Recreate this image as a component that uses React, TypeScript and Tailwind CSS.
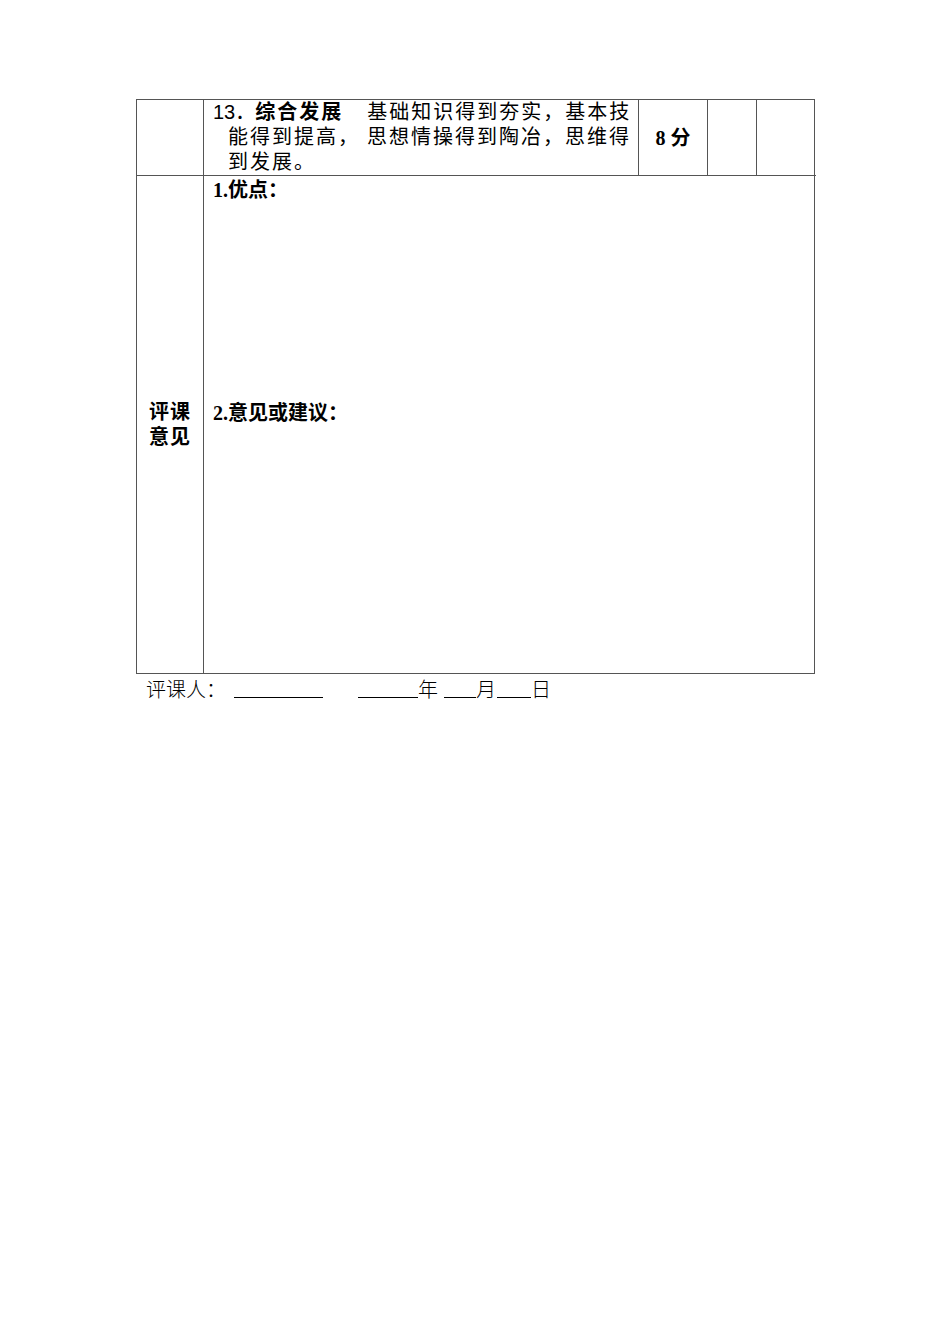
const cjk = { fontFamily: '"Liberation Serif", "Noto Sans CJK SC", serif' };

export default function App() {
  return (
    <div className="min-h-[1344px] w-[950px] bg-white text-black" style={cjk}>
      <div className="pt-[99px] pl-[136px]">
        <div className="grid w-[679px] grid-cols-[67px_435px_69px_49px_59px] border border-[#555]">
          {/* row 1 */}
          <div className="h-[76px] border-r border-b border-[#555]" />
          <div className="border-r border-b border-[#555] pl-[9px] text-[20px] leading-[25px] tracking-[2px]">
            <div>
              <span style={{ fontFamily: '"Liberation Sans", "Noto Sans CJK SC", sans-serif' }} className="tracking-normal">13．</span>
              <span className="font-bold">综合发展</span>
              <span className="inline-block w-[24px]" />
              基础知识得到夯实，基本技
            </div>
            <div className="pl-[15px]">能得到提高，&nbsp;思想情操得到陶冶，思维得</div>
            <div className="pl-[15px]">到发展。</div>
          </div>
          <div className="flex items-center justify-center border-r border-b border-[#555] text-[20px] font-bold">
            8<span className="ml-[5px]">分</span>
          </div>
          <div className="border-r border-b border-[#555]" />
          <div className="border-b border-[#555]" />

          {/* row 2 */}
          <div className="flex h-[497px] flex-col items-center justify-center border-r border-[#555] text-[20px] font-bold leading-[25px] tracking-[1px]">
            <div>评课</div>
            <div>意见</div>
          </div>
          <div className="col-span-4 pl-[9px] pt-[2px] text-[20px] font-bold leading-[25px]">
            <div>1.优点：</div>
            <div className="mt-[198px]">2.意见或建议：</div>
          </div>
        </div>
        <div className="flex items-end pl-[10px] pt-[2px] text-[20px] leading-[25px]" style={{ fontFamily: '"Noto Sans CJK SC", sans-serif', fontWeight: 300 }}>
          <span>评课人：</span>
          <span className="ml-[8px] mb-[3px] inline-block w-[89px] border-b border-black" />
          <span className="ml-[35px] mb-[3px] inline-block w-[60px] border-b border-black" />
          <span>年</span>
          <span className="ml-[6px] mb-[3px] inline-block w-[32px] border-b border-black" />
          <span>月</span>
          <span className="ml-[1px] mb-[3px] inline-block w-[34px] border-b border-black" />
          <span>日</span>
        </div>
      </div>
    </div>
  );
}
